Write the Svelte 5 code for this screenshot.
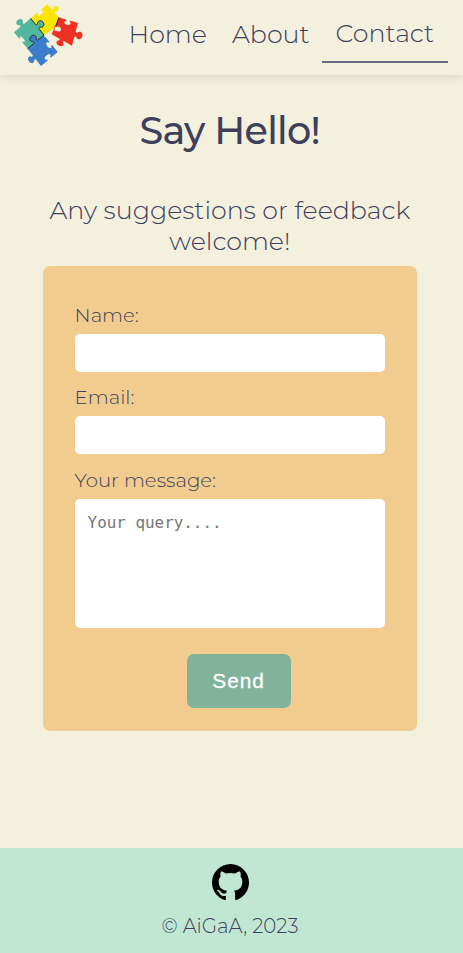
<script>
  // Builds one jigsaw outline: corners in order, tab > 0 pushes out, tab < 0 cuts in.
  function edge(a, b, s) {
    const dx = b[0] - a[0];
    const dy = b[1] - a[1];
    const p = (t, h) => `${(a[0] + dx * t + dy * h * s).toFixed(1)} ${(a[1] + dy * t - dx * h * s).toFixed(1)}`;
    if (!s) return `L${b.join(' ')}`;
    return (
      `L${p(0.38, 0)}C${p(0.43, 0.03)} ${p(0.43, 0.07)} ${p(0.38, 0.11)}` +
      `C${p(0.29, 0.2)} ${p(0.35, 0.34)} ${p(0.5, 0.34)}` +
      `C${p(0.65, 0.34)} ${p(0.71, 0.2)} ${p(0.62, 0.11)}` +
      `C${p(0.57, 0.07)} ${p(0.57, 0.03)} ${p(0.62, 0)}L${b.join(' ')}`
    );
  }
  function piece(corners, tabs) {
    const sides = corners.map((a, i) => edge(a, corners[(i + 1) % corners.length], tabs[i]));
    return `M${corners[0].join(' ')}${sides.join('')}Z`;
  }

  const pieces = [
    { fill: '#fbe500', d: piece([[92, 55], [142, 13], [178, 54], [132, 105]], [-0.5, 1, 0, 0]) },
    { fill: '#fbe500', d: 'M176 52L168 78L157 102L150 105L132 108L150 60Z' },
    { fill: '#52b59d', d: piece([[42, 97], [92, 55], [132, 105], [83, 146]], [0.95, 1, -1, -0.45]) },
    { fill: '#3b7dcb', d: piece([[83, 146], [132, 105], [173, 156], [123, 198]], [1, -0.6, -0.6, 0.9]) },
    { fill: '#f4f0de', d: 'M154 91L170 78L160 106L134 112L133 106Z' },
    { fill: '#ef3022', d: piece([[176, 52], [234, 69], [216, 137], [155, 103]], [-0.7, 0.95, 0.8, 0]) },
    { fill: '#f4f0de', d: 'M165 82C174 76 184 81 183 89C181 97 171 95 163 91Z' }
  ];
  const seams = [
    `M92 55${edge([92, 55], [132, 105], 1)}`,
    `M83 146${edge([83, 146], [132, 105], 1)}`,
    'M177 53L168 78'
  ];
</script>

<div class="page">
  <header>
    <svg class="logo" viewBox="0 0 300 225" aria-label="Puzzle logo">
      {#each pieces as p}<path d={p.d} fill={p.fill} />{/each}
      {#each seams as s}<path d={s} fill="none" stroke="#17302f" stroke-width="3" />{/each}
    </svg>
    <nav>
      <a class="home" href="#home">Home</a>
      <a class="about" href="#about">About</a>
      <a class="active" href="#contact">Contact</a>
    </nav>
  </header>

  <main>
    <h1>Say Hello!</h1>
    <p class="lead">Any suggestions or feedback<br />welcome!</p>
    <form>
      <label for="name">Name:</label>
      <input id="name" type="text" />
      <label for="email">Email:</label>
      <input id="email" type="email" />
      <label for="message">Your message:</label>
      <textarea id="message" placeholder="Your query...."></textarea>
      <button type="button">Send</button>
    </form>
  </main>

  <footer>
    <svg class="github" viewBox="0 0 16 16" aria-label="GitHub">
      <path d="M8 0C3.58 0 0 3.58 0 8c0 3.54 2.29 6.53 5.47 7.59.4.07.55-.17.55-.38 0-.19-.01-.82-.01-1.49-2.01.37-2.53-.49-2.69-.94-.09-.23-.48-.94-.82-1.13-.28-.15-.68-.52-.01-.53.63-.01 1.08.58 1.23.82.72 1.21 1.87.87 2.33.66.07-.52.28-.87.51-1.07-1.78-.2-3.64-.89-3.64-3.95 0-.87.31-1.59.82-2.15-.08-.2-.36-1.02.08-2.12 0 0 .67-.21 2.2.82.64-.18 1.32-.27 2-.27s1.36.09 2 .27c1.53-1.04 2.2-.82 2.2-.82.44 1.1.16 1.92.08 2.12.51.56.82 1.27.82 2.15 0 3.07-1.87 3.75-3.65 3.95.29.25.54.73.54 1.48 0 1.07-.01 1.93-.01 2.2 0 .21.15.46.55.38A8.01 8.01 0 0 0 16 8c0-4.42-3.58-8-8-8z" />
    </svg>
    <p>© AiGaA, 2023</p>
  </footer>
</div>

<style>
  :global(body) { margin: 0; background: #f4f0de; }
  .page {
    height: 953px;
    display: flex;
    flex-direction: column;
    overflow: hidden;
    background: #f4f0de;
    color: #3d405b;
    font-family: Montserrat, Inter, sans-serif;
    font-weight: 300;
  }
  header {
    height: 75px;
    flex: none;
    display: flex;
    justify-content: space-between;
    box-shadow: 0 1px 10px rgba(61, 64, 60, 0.17);
  }
  .logo { width: 100px; height: 75px; flex: none; }
  nav { display: flex; padding: 5px 15px 0 0; }
  a {
    box-sizing: border-box;
    height: 58px;
    padding: 0 13px;
    color: inherit;
    text-decoration: none;
    font-size: 25.3px;
    line-height: 58px;
    white-space: nowrap;
  }
  .home, .about { width: 103px; }
  .home { padding-left: 12.6px; }
  .active {
    width: 126px;
    padding-left: 13.6px;
    line-height: 56px;
    border-bottom: 2px solid #696b85;
  }
  main {
    flex: 1;
    display: flex;
    flex-direction: column;
    align-items: center;
    padding-right: 3.4px;
  }
  h1 {
    margin: 32px 0 0;
    font-size: 38.2px;
    line-height: 47px;
    font-weight: 500;
    letter-spacing: -0.7px;
    white-space: nowrap;
  }
  .lead {
    margin: 41px 0 0;
    font-size: 25.3px;
    line-height: 31px;
    text-align: center;
    white-space: nowrap;
  }
  form {
    box-sizing: border-box;
    width: 374.4px;
    height: 465px;
    margin-top: 8.7px;
    padding: 36.3px 32px 0;
    display: flex;
    flex-direction: column;
    background: #f2cc8f;
    border-radius: 7px;
  }
  label { font-size: 19.7px; line-height: 27px; margin-bottom: 5.1px; }
  label:first-child { margin-bottom: 4.6px; }
  input, textarea {
    box-sizing: border-box;
    display: block;
    width: 100%;
    margin: 0;
    border: 0;
    border-radius: 5px;
    background: #fff;
    outline: 0;
  }
  input { height: 38px; flex: none; margin-bottom: 12.55px; }
  textarea {
    height: 129px;
    padding: 14px 13px;
    resize: none;
    font: 15.9px/19px "DejaVu Sans Mono", monospace;
  }
  textarea::placeholder { color: #757575; opacity: 1; }
  button {
    align-self: center;
    width: 104px;
    height: 53.5px;
    margin: 26.4px 0 0 17.6px;
    padding: 0 0 1px;
    border: 0;
    border-radius: 7px;
    background: #81b29a;
    color: #fff;
    font: 20.8px "Liberation Sans", Arial, sans-serif;
    letter-spacing: 1px;
    -webkit-text-stroke: 0.3px #fff;
  }
  footer {
    flex: none;
    height: 105px;
    padding-right: 3px;
    box-sizing: border-box;
    display: flex;
    flex-direction: column;
    align-items: center;
    background: #c1e7d4;
  }
  .github { width: 37px; height: 37px; margin-top: 16px; fill: #000; }
  footer p { margin: 12px 0 0; font-size: 19.8px; line-height: 27px; }
</style>
